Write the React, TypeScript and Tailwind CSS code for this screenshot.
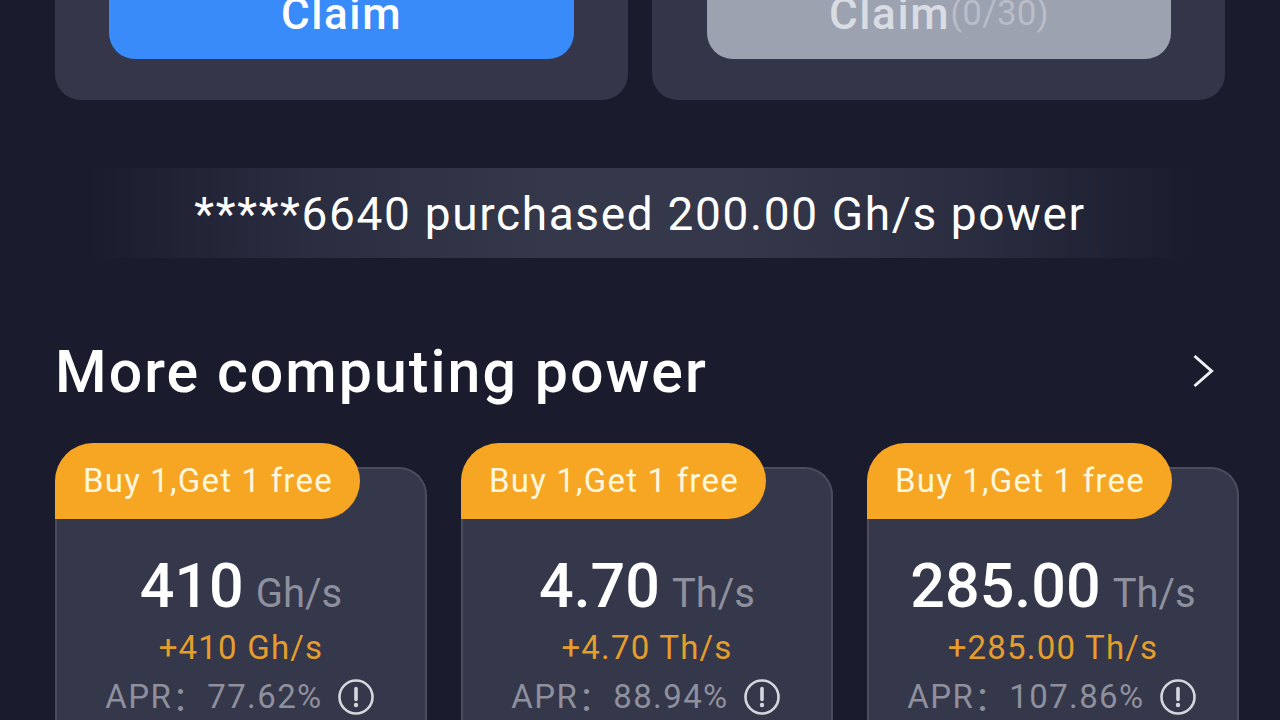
const font = { fontFamily: "Roboto, sans-serif" };

function Info() {
  return (
    <svg width="38" height="38" viewBox="0 0 38 38" fill="none" className="shrink-0">
      <circle cx="19" cy="19" r="16.5" stroke="#d6d7dc" strokeWidth="2.6" />
      <path d="M19 10.5V21.5" stroke="#d6d7dc" strokeWidth="3.6" strokeLinecap="round" />
      <circle cx="19" cy="27" r="2.2" fill="#d6d7dc" />
    </svg>
  );
}

function Product({ value, unit, apr, ml }: { value: string; unit: string; apr: string; ml: string }) {
  return (
    <div className={`relative w-[372px] h-[253px] shrink-0 rounded-t-[28px] border-x-2 border-t-2 border-[#4b4d5e] bg-[#35374a] ${ml}`}>
      <div className="absolute left-[-2px] top-[-26px] h-[76px] w-[305px] flex items-center pl-[28px] rounded-tl-[38px] rounded-r-[38px] bg-[#f6a623] text-[#fff6dc] text-[33px] tracking-[1.2px]">
        Buy 1,Get 1 free
      </div>
      <div className="pt-[85px] flex flex-col items-center">
        <div className="flex items-baseline h-[64px] leading-[64px]">
          <span className="text-[61px] font-medium text-white">{value}</span>
          <span className="ml-[12px] text-[40px] text-[#8e909d]">{unit}</span>
        </div>
        <div className="mt-[10px] h-[40px] leading-[40px] text-[33px] tracking-[1.2px] text-[#e59e2c]">
          +{value} {unit}
        </div>
        <div className="mt-[3px] flex items-center h-[52px] text-[33px] tracking-[1.4px] text-[#8e909d]">
          <span>APR</span>
          <span className="w-[35px] text-left" style={{ fontFamily: '"Noto Sans CJK SC", sans-serif' }}>：</span>
          <span>{apr}</span>
          <span className="ml-[14px] mr-[2px]"><Info /></span>
        </div>
      </div>
    </div>
  );
}

export default function App() {
  return (
    <div style={font} className="h-[720px] w-[1280px] overflow-hidden bg-[#1a1c2e] flex flex-col">
      <div className="flex pl-[55px] gap-[24px] h-[100px] shrink-0">
        <div className="w-[573px] h-[100px] rounded-b-[26px] bg-[#35364a] pl-[54px]">
          <div className="w-[465px] h-[59px] rounded-b-[26px] bg-[#388bf8] flex justify-center items-start text-[44px] font-medium leading-[28px] tracking-[1.6px] text-white">
            Claim
          </div>
        </div>
        <div className="w-[573px] h-[100px] rounded-b-[26px] bg-[#333548] pl-[55px]">
          <div className="w-[464px] h-[59px] rounded-b-[26px] bg-[#9ca2b0] flex justify-center items-start leading-[28px] font-medium text-[44px] tracking-[1.6px] text-[#d9dce3]">
            Claim<span className="text-[35px] font-normal tracking-[0.2px] text-[#b9bdc8]">(0/30)</span>
          </div>
        </div>
      </div>

      <div className="mt-[68px] mx-[85px] h-[90px] shrink-0 flex items-center justify-center bg-[linear-gradient(90deg,#1a1c2e_0%,#2a2c3f_20%,#35374a_42%,#35374a_58%,#2a2c3f_80%,#1a1c2e_100%)] text-[46px] tracking-[1.65px] pt-[3px] text-white">
        *****6640 purchased 200.00 Gh/s power
      </div>

      <div className="mt-[83px] h-[62px] shrink-0 flex items-center justify-between pl-[55px] pr-[66px]">
        <span className="text-[59px] font-medium tracking-[2.05px] text-white">More computing power</span>
        <svg width="22" height="34" viewBox="0 0 22 34" fill="none" className="mt-[-2px]">
          <path d="M2.5 2L19.5 17L2.5 32" stroke="#f2f2f4" strokeWidth="3" />
        </svg>
      </div>

      <div className="mt-[64px] flex pl-[55px]">
        <Product value="410" unit="Gh/s" apr="77.62%" ml="" />
        <Product value="4.70" unit="Th/s" apr="88.94%" ml="ml-[34px]" />
        <Product value="285.00" unit="Th/s" apr="107.86%" ml="ml-[34px]" />
      </div>
    </div>
  );
}
